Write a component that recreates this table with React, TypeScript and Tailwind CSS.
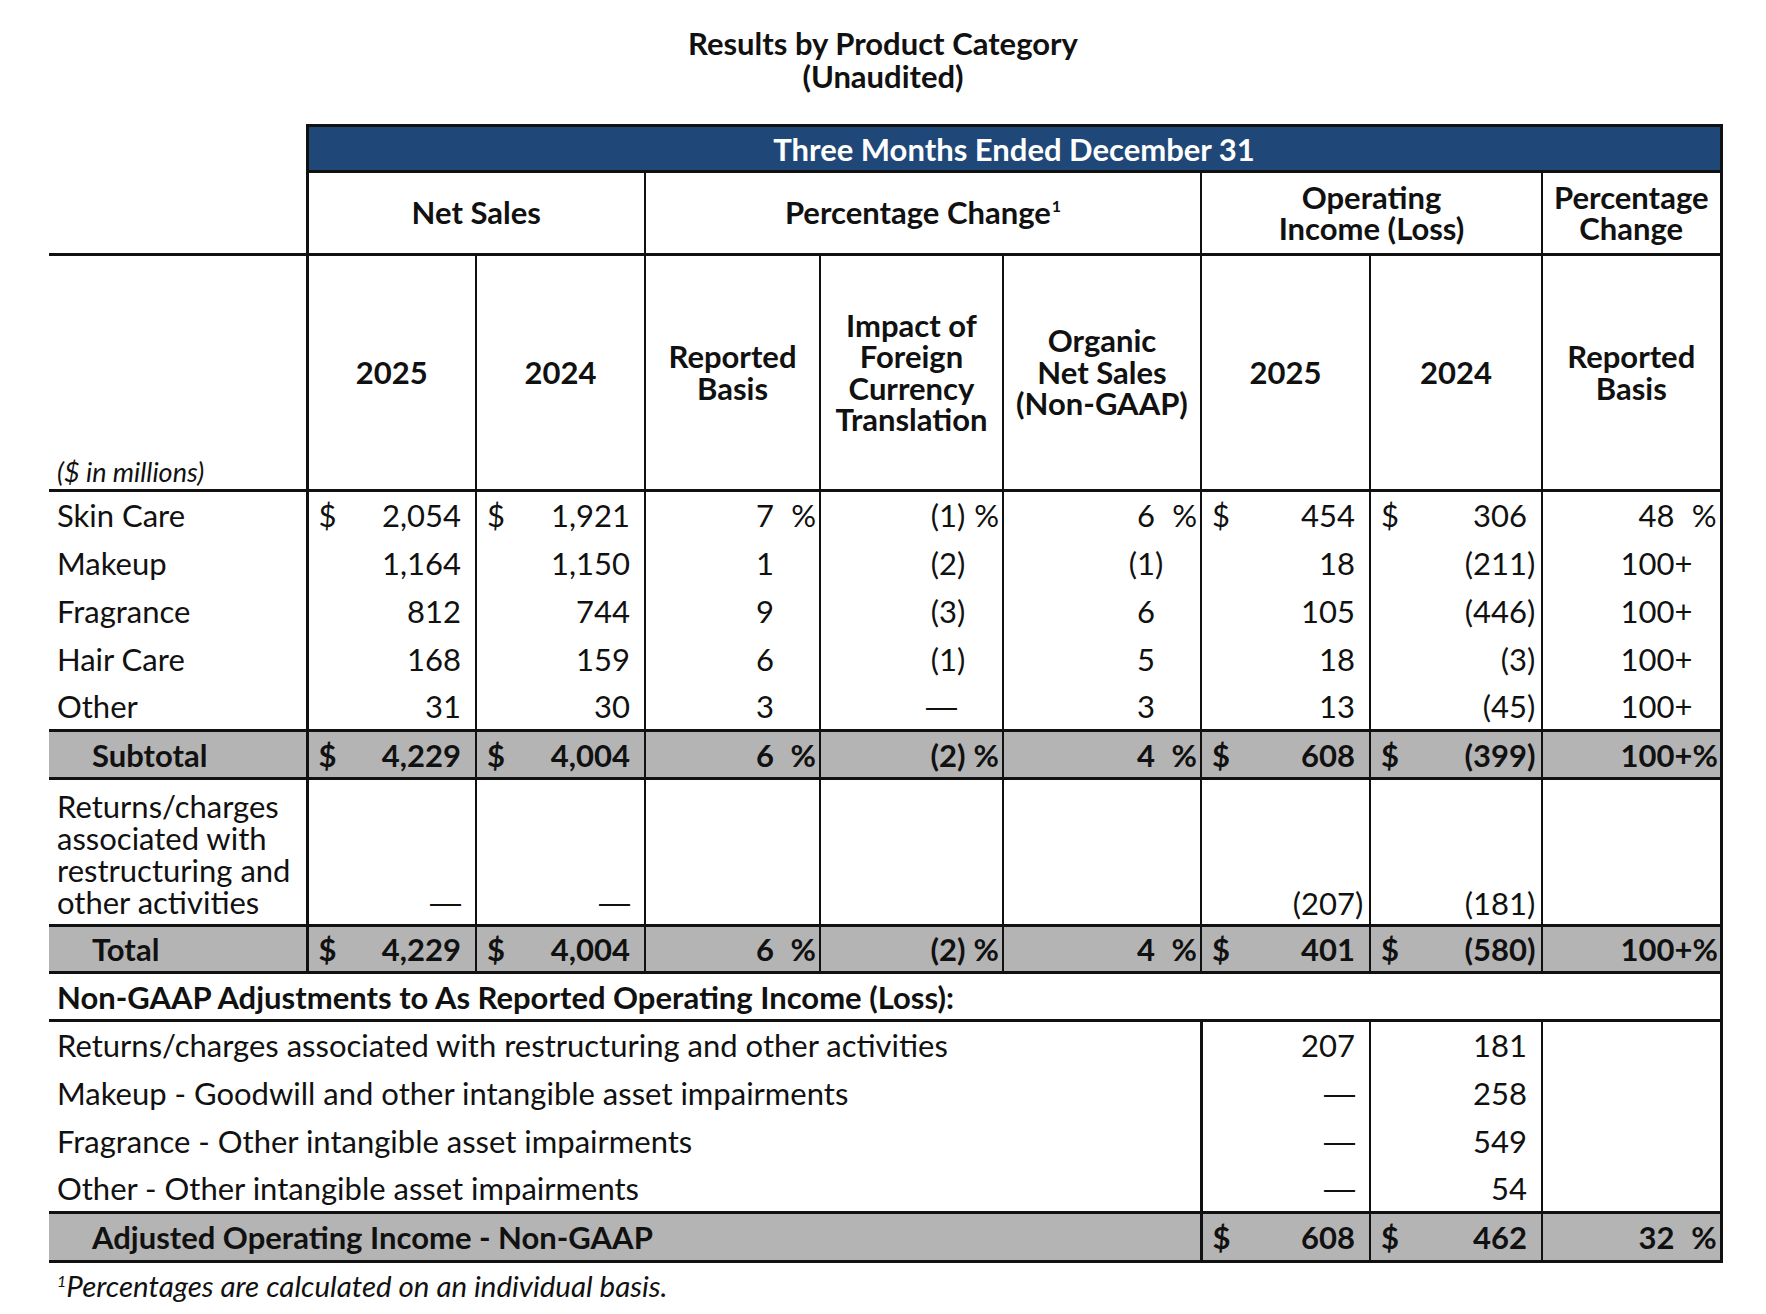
import React from "react";

type Row = { label: string; cells: string[] };

const rows: Row[] = [
    { label: "Skin Care", cells: ["$2,054", "$1,921", "7%", "(1)%", "6%", "$454", "$306", "48%"] },
    { label: "Makeup", cells: ["1,164", "1,150", "1", "(2)", "(1)", "18", "(211)", "100+"] },
    { label: "Fragrance", cells: ["812", "744", "9", "(3)", "6", "105", "(446)", "100+"] },
    { label: "Hair Care", cells: ["168", "159", "6", "(1)", "5", "18", "(3)", "100+"] },
    { label: "Other", cells: ["31", "30", "3", "—", "3", "13", "(45)", "100+"] },
];

const subtotal = ["$4,229", "$4,004", "6%", "(2)%", "4%", "$608", "$(399)", "100+%"];
const total = ["$4,229", "$4,004", "6%", "(2)%", "4%", "$401", "$(580)", "100+%"];

const adjustments = [
    { label: "Returns/charges associated with restructuring and other activities", a: "207", b: "181" },
    { label: "Makeup - Goodwill and other intangible asset impairments", a: "—", b: "258" },
    { label: "Fragrance - Other intangible asset impairments", a: "—", b: "549" },
    { label: "Other - Other intangible asset impairments", a: "—", b: "54" },
];

// columns 3,4,5 and 8 are percentages, the rest are dollar amounts
const pctCols = [2, 3, 4, 7];

function Num({ raw, pctCol }: { raw: string; pctCol: boolean }) {
    let v = raw;
    const d = v.startsWith("$");
    if (d) v = v.slice(1);
    const p = v.endsWith("%");
    if (p) v = v.slice(0, -1);
    let t = "";
    if (v.endsWith(")") || v.endsWith("+")) {
        t = v.slice(-1);
        v = v.slice(0, -1);
    }
    return (
        <div className="flex items-center whitespace-nowrap">
            <span className="w-[16px] text-left">{d ? "$" : ""}</span>
            <span className="flex-1 text-right">
                {v === "—" ? <span className="font-['Liberation_Sans'] font-normal">—</span> : v}
            </span>
            <span className={`flex justify-between ${pctCol ? "w-[42px]" : "w-[11px]"}`}>
                <span>{t}</span>
                <span>{p ? "%" : ""}</span>
            </span>
        </div>
    );
}

const line = "border-[#111]";
const numCell = `pl-[10px] pr-[3px] border-x-2 ${line}`;

function NumCells({ cells, extra = "" }: { cells: string[]; extra?: string }) {
    return (
        <>
            {cells.map((c, i) => (
                <td
                    key={i}
                    className={`${numCell} ${i === 0 ? "border-l-[3px]" : ""} ${i === 7 ? "border-r-[3px]" : ""} ${extra}`}
                >
                    <Num raw={c} pctCol={pctCols.includes(i)} />
                </td>
            ))}
        </>
    );
}

export default function App() {
    const head = `border-x-2 ${line} text-center font-bold leading-[31.5px]`;
    return (
        <div className="min-h-screen bg-white text-[#111] font-['Lato','Liberation_Sans',sans-serif] text-[31px] leading-[34px] pt-[27px] pb-[40px]">
            <div className="text-center font-bold text-[31px] leading-[33px]">
                <p>Results by Product Category</p>
                <p>(Unaudited)</p>
            </div>

            <table className="table-fixed border-collapse ml-[49px] mt-[31px] w-[1672px]">
                <colgroup>
                    <col className="w-[258px]" />
                    <col className="w-[169px]" />
                    <col className="w-[169px]" />
                    <col className="w-[175px]" />
                    <col className="w-[183px]" />
                    <col className="w-[198px]" />
                    <col className="w-[169px]" />
                    <col className="w-[172px]" />
                    <col className="w-[179px]" />
                </colgroup>
                <tbody>
                    <tr className="h-[46px]">
                        <td></td>
                        <td
                            colSpan={8}
                            className={`border-[3px] ${line} bg-[#1f4878] text-white text-center font-bold`}
                        >
                            Three Months Ended December 31
                        </td>
                    </tr>
                    <tr className="h-[83px]">
                        <td></td>
                        <td colSpan={2} className={`${head} border-l-[3px]`}>
                            Net Sales
                        </td>
                        <td colSpan={3} className={head}>
                            Percentage Change<sup className="text-[16px] -top-[12px] ml-[1px]">1</sup>
                        </td>
                        <td colSpan={2} className={head}>
                            Operating
                            <br />
                            Income (Loss)
                        </td>
                        <td className={`${head} border-r-[3px]`}>
                            Percentage
                            <br />
                            Change
                        </td>
                    </tr>
                    <tr className={`h-[236px] border-t-[3px] border-b-[3px] ${line}`}>
                        <td className="align-bottom pl-[8px] pb-[2px] italic text-[27px] leading-[30px]">
                            ($ in millions)
                        </td>
                        <td className={`${head} border-l-[3px]`}>2025</td>
                        <td className={head}>2024</td>
                        <td className={head}>
                            Reported
                            <br />
                            Basis
                        </td>
                        <td className={head}>
                            Impact of
                            <br />
                            Foreign
                            <br />
                            Currency
                            <br />
                            Translation
                        </td>
                        <td className={head}>
                            Organic
                            <br />
                            Net Sales
                            <br />
                            (Non-GAAP)
                        </td>
                        <td className={head}>2025</td>
                        <td className={head}>2024</td>
                        <td className={`${head} border-r-[3px]`}>
                            Reported
                            <br />
                            Basis
                        </td>
                    </tr>
                    {rows.map((r) => (
                        <tr key={r.label} className="h-[48px]">
                            <td className="pl-[8px] whitespace-nowrap">{r.label}</td>
                            <NumCells cells={r.cells} />
                        </tr>
                    ))}
                    <tr className={`h-[48px] bg-[#b4b4b4] font-bold border-y-[3px] ${line}`}>
                        <td className="pl-[43px]">Subtotal</td>
                        <NumCells cells={subtotal} />
                    </tr>
                    <tr className="h-[147px]">
                        <td className="pl-[8px] pb-[6px] align-bottom leading-[32px] whitespace-nowrap">
                            Returns/charges
                            <br />
                            associated with
                            <br />
                            restructuring and
                            <br />
                            other activities
                        </td>
                        {["—", "—", "", "", "", "(207)", "(181)", ""].map((c, i) => (
                            <td
                                key={i}
                                className={`${numCell} align-bottom pb-[4px] ${i === 0 ? "border-l-[3px]" : ""} ${i === 7 ? "border-r-[3px]" : ""}`}
                            >
                                <Num raw={c} pctCol={pctCols.includes(i)} />
                            </td>
                        ))}
                    </tr>
                    <tr className={`h-[47px] bg-[#b4b4b4] font-bold border-y-[3px] ${line}`}>
                        <td className="pl-[43px]">Total</td>
                        <NumCells cells={total} />
                    </tr>
                    <tr className={`h-[48px] border-b-[3px] ${line}`}>
                        <td colSpan={9} className={`pl-[8px] font-bold whitespace-nowrap border-r-[3px] ${line}`}>
                            Non-GAAP Adjustments to As Reported Operating Income (Loss):
                        </td>
                    </tr>
                    {adjustments.map((a) => (
                        <tr key={a.label} className="h-[48px]">
                            <td colSpan={6} className="pl-[8px] whitespace-nowrap">
                                {a.label}
                            </td>
                            <td className={`${numCell} border-l-[3px]`}>
                                <Num raw={a.a} pctCol={false} />
                            </td>
                            <td className={numCell}>
                                <Num raw={a.b} pctCol={false} />
                            </td>
                            <td className={`${numCell} border-r-[3px]`}></td>
                        </tr>
                    ))}
                    <tr className={`h-[49px] bg-[#b4b4b4] font-bold border-y-[3px] ${line}`}>
                        <td colSpan={6} className="pl-[43px] whitespace-nowrap">
                            Adjusted Operating Income - Non-GAAP
                        </td>
                        <td className={`${numCell} border-l-[3px]`}>
                            <Num raw="$608" pctCol={false} />
                        </td>
                        <td className={numCell}>
                            <Num raw="$462" pctCol={false} />
                        </td>
                        <td className={`${numCell} border-r-[3px]`}>
                            <Num raw="32%" pctCol={true} />
                        </td>
                    </tr>
                </tbody>
            </table>

            <p className="ml-[57px] mt-[8px] italic text-[29.5px] leading-[30px]">
                <sup className="text-[16px] -top-[10px]">1</sup>Percentages are calculated on an individual basis.
            </p>
        </div>
    );
}
